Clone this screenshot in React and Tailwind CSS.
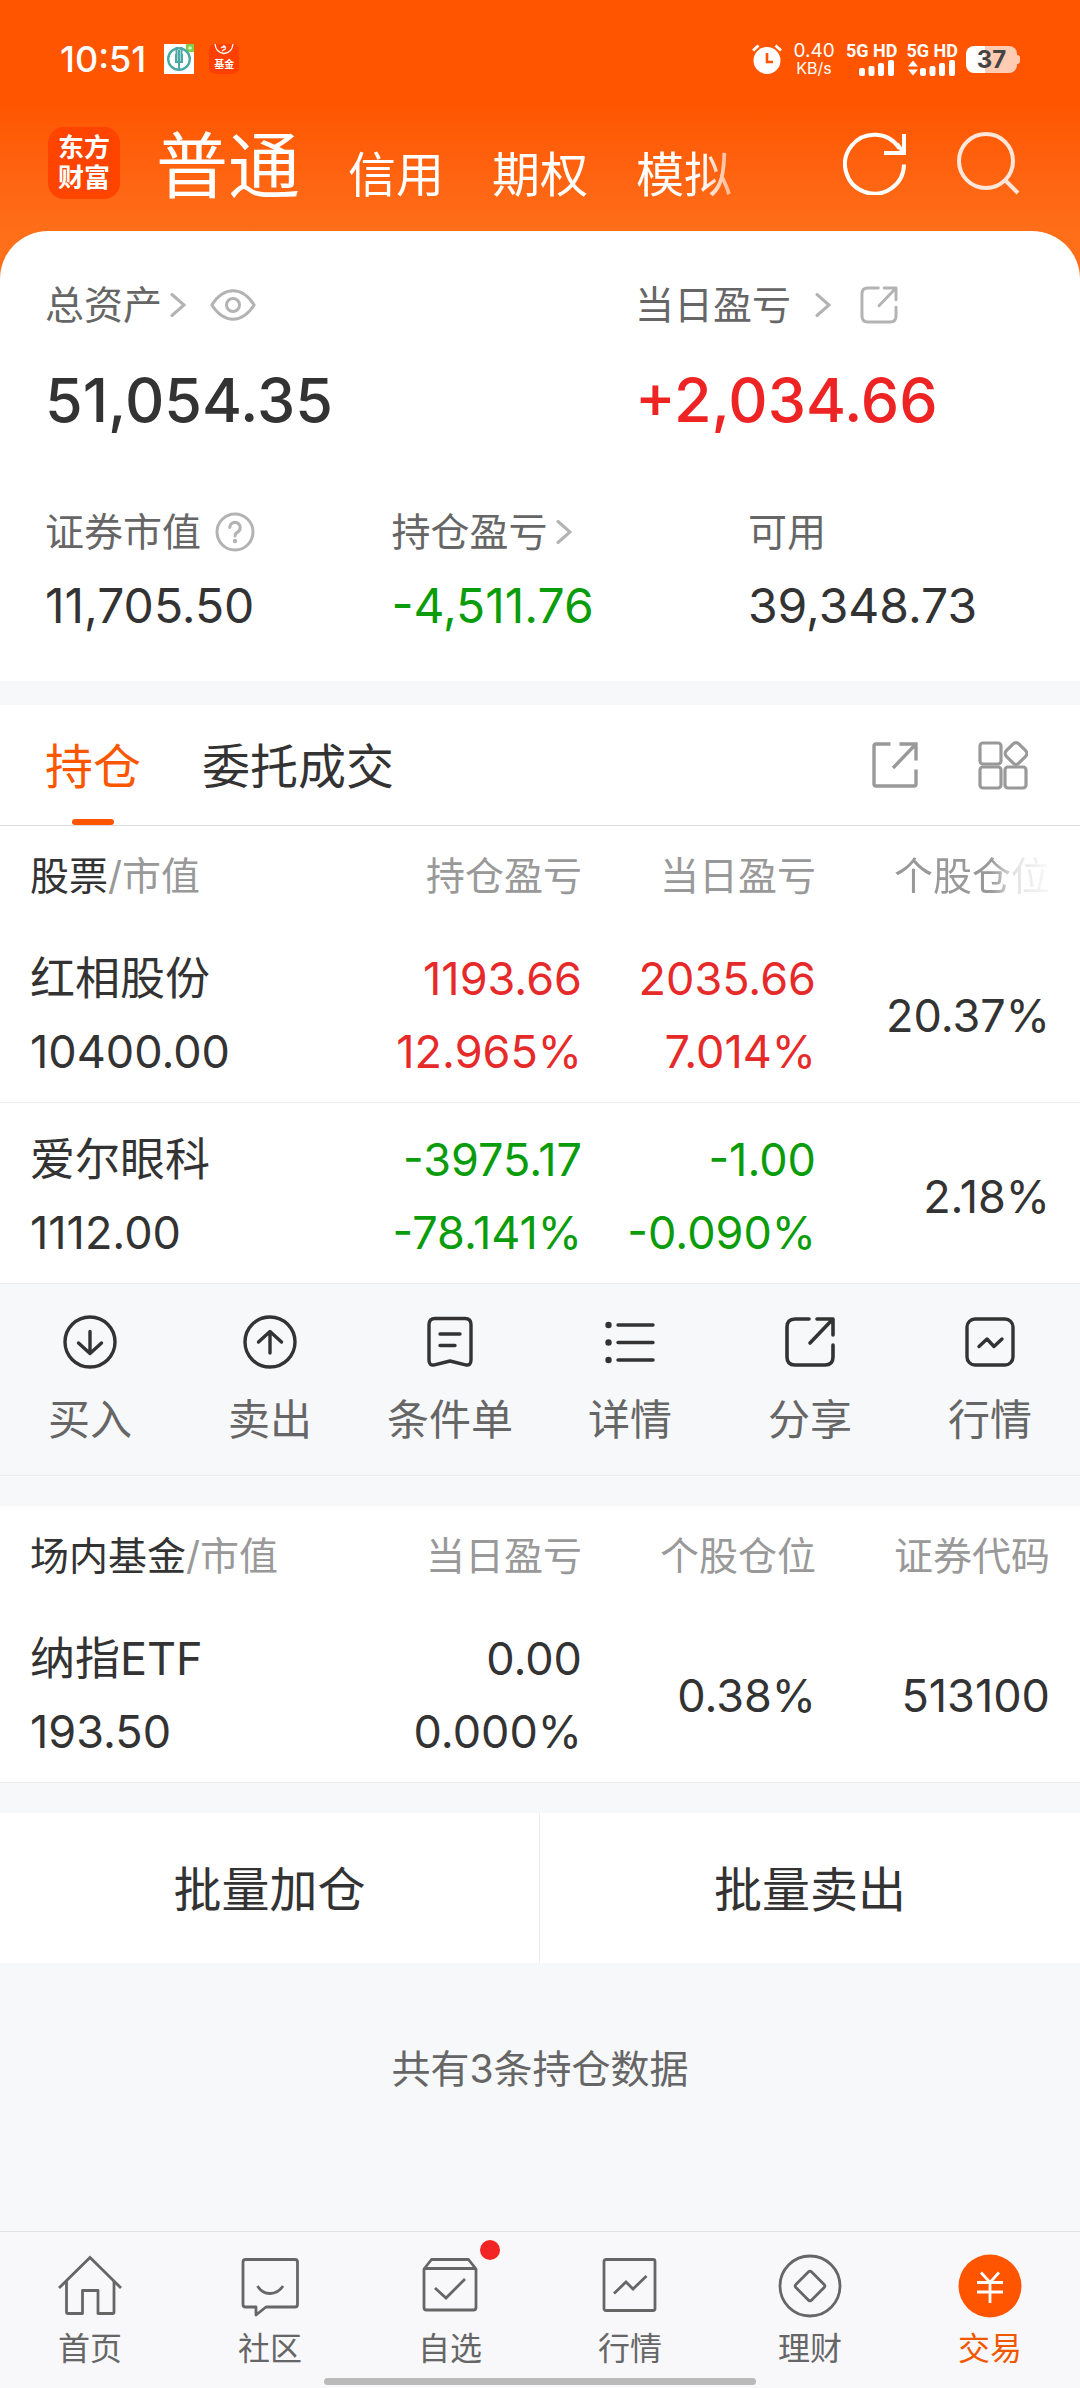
import React, { useState } from 'react';

const summary = [
  { label: '证券市值', value: '11,705.50', color: 'text-[#333]', width: 'w-[35%]', extra: 'help' },
  { label: '持仓盈亏', value: '-4,511.76', color: 'text-[#0a9c0a]', width: 'w-[36%]', extra: 'arrow' },
  { label: '可用', value: '39,348.73', color: 'text-[#333]', width: 'w-[29%]', extra: null },
];

const stocks = {
  title: '股票',
  columns: ['持仓盈亏', '当日盈亏', '个股仓位'],
  fadeLast: true,
  rows: [
    {
      name: '红相股份',
      value: '10400.00',
      color: 'text-[#e62a2a]',
      cells: [['1193.66', '12.965%'], ['2035.66', '7.014%'], ['20.37%']],
    },
    {
      name: '爱尔眼科',
      value: '1112.00',
      color: 'text-[#0a9c0a]',
      cells: [['-3975.17', '-78.141%'], ['-1.00', '-0.090%'], ['2.18%']],
    },
  ],
};

const funds = {
  title: '场内基金',
  columns: ['当日盈亏', '个股仓位', '证券代码'],
  fadeLast: false,
  rows: [
    {
      name: '纳指ETF',
      value: '193.50',
      color: 'text-[#333]',
      cells: [['0.00', '0.000%'], ['0.38%'], ['513100']],
    },
  ],
};

const ChevronRight = () => (
  <svg className="w-4 h-6" viewBox="0 0 16 24" fill="none" stroke="#b3b3b3" strokeWidth="3" strokeLinecap="round">
    <path d="M2 1.5 L14 12 L2 22.5" />
  </svg>
);

const EyeIcon = () => (
  <svg className="w-[46px] h-8" viewBox="0 0 46 32" fill="none" stroke="#b3b3b3" strokeWidth="3">
    <path d="M1.8 16 C8 6.5 15 1.8 23 1.8 S38 6.5 44.2 16 C38 25.500 31 30.200 23 30.200 S8 25.500 1.800 16 Z" strokeLinejoin="round" />
    <circle cx="23" cy="16" r="6.500" />
  </svg>
);

const HelpIcon = () => (
  <svg className="w-10 h-10" viewBox="0 0 40 40" fill="none" stroke="#b3b3b3" strokeWidth="3">
    <circle cx="20" cy="20" r="18" />
    <path d="M14.800 15.500 a5.200 5.200 0 1 1 7.800 4.600 q-2.600 1.500 -2.600 4" strokeLinecap="round" />
    <circle cx="20" cy="29" r="2.200" fill="#b3b3b3" stroke="none" />
  </svg>
);

const ShareRound = ({ className, stroke, strokeWidth }) => (
  <svg className={className} viewBox="0 0 54 54" fill="none" stroke={stroke} strokeWidth={strokeWidth} strokeLinecap="round" strokeLinejoin="round">
    <path d="M26 4 H12 Q4 4 4 12 V42 Q4 50 12 50 H42 Q50 50 50 42 V30" />
    <path d="M34 4 H50 V20 M49 5 L27 28" />
  </svg>
);

const ShareSquare = () => (
  <svg className="w-[46px] h-[46px]" viewBox="0 0 46 46" fill="none" stroke="#999" strokeWidth="3.400">
    <path d="M18.500 2 H4 Q2 2 2 4 V42 Q2 44 4 44 H42 Q44 44 44 42 V27.500" />
    <path d="M27.500 2 H44 V18.500 M43.500 2.500 L21 26" />
  </svg>
);

const GridIcon = () => (
  <svg className="w-[50px] h-[50px]" viewBox="0 0 50 50" fill="none" stroke="#999" strokeWidth="3.200">
    <rect x="2" y="3" width="21" height="21" rx="3" />
    <rect x="2" y="27" width="21" height="21" rx="3" />
    <rect x="27" y="27" width="21" height="21" rx="3" />
    <rect x="29.200" y="4.700" width="17.600" height="17.600" rx="4" transform="rotate(45 38 13.500)" />
  </svg>
);

const actionSvg = {
  className: 'w-[54px] h-[54px]',
  viewBox: '0 0 54 54',
  fill: 'none',
  stroke: '#333',
  strokeWidth: 3.4,
  strokeLinecap: 'round',
  strokeLinejoin: 'round',
};

const actions = [
  {
    label: '买入',
    icon: (
      <svg {...actionSvg}>
        <circle cx="27" cy="27" r="25" />
        <path d="M27 16.500 V38 M15.500 28 L27 38.500 L38.500 28" />
      </svg>
    ),
  },
  {
    label: '卖出',
    icon: (
      <svg {...actionSvg}>
        <circle cx="27" cy="27" r="25" />
        <path d="M27 38 V17 M15.500 27 L27 16.500 L38.500 27" />
      </svg>
    ),
  },
  {
    label: '条件单',
    icon: (
      <svg {...actionSvg}>
        <path d="M12 3.500 H42 Q48 3.500 48 9.500 V45 Q48 51 42.500 49.800 L27 46 L11.500 49.800 Q6 51 6 45 V9.500 Q6 3.500 12 3.500 Z" />
        <path d="M17 19 H37 M17 30.500 H32" />
      </svg>
    ),
  },
  {
    label: '详情',
    icon: (
      <svg {...actionSvg}>
        <path d="M15 10 H50 M15 27.500 H50 M15 45 H50" />
        <g fill="#333" stroke="none">
          <circle cx="5.500" cy="10" r="3.200" />
          <circle cx="5.500" cy="27.500" r="3.200" />
          <circle cx="5.500" cy="45" r="3.200" />
        </g>
      </svg>
    ),
  },
  {
    label: '分享',
    icon: <ShareRound className="w-[54px] h-[54px]" stroke="#333" strokeWidth="3.600" />,
  },
  {
    label: '行情',
    icon: (
      <svg {...actionSvg}>
        <rect x="4" y="4" width="46" height="46" rx="8" />
        <path d="M16 31.500 L24 24 L31 31.500 L39 24" />
      </svg>
    ),
  },
];

const navSvg = {
  className: 'w-16 h-16',
  viewBox: '0 0 64 64',
  fill: 'none',
  stroke: '#666',
  strokeWidth: 2.8,
};

const navItems = [
  {
    label: '首页',
    icon: (
      <svg {...navSvg}>
        <path d="M1 34 L32 3.500 L63 34" />
        <path d="M8.500 27 V58 Q8.500 59.500 10 59.500 H24.500 V36.500 H40 V59.500 H54.500 Q56 59.500 56 58 V27" strokeLinejoin="round" />
      </svg>
    ),
  },
  {
    label: '社区',
    icon: (
      <svg {...navSvg}>
        <path d="M7.500 5.500 H57 Q59.500 5.500 59.500 8 V50.500 Q59.500 53 57 53 H28 L18 61 V53 H7.500 Q5 53 5 50.500 V8 Q5 5.500 7.500 5.500 Z" strokeLinejoin="round" />
        <path d="M19.500 32 Q24 39.500 32 39.500 T45 32" />
      </svg>
    ),
  },
  {
    label: '自选',
    dot: true,
    icon: (
      <svg {...navSvg}>
        <path d="M6 15 L13.500 5.500 H50.500 L58 15 V53.500 Q58 56 55.500 56 H8.500 Q6 56 6 53.500 Z M6 14.500 H58" strokeLinejoin="round" />
        <path d="M17 34 L28 44 L47 25" />
      </svg>
    ),
  },
  {
    label: '行情',
    icon: (
      <svg {...navSvg}>
        <rect x="6" y="5.500" width="51" height="51" rx="2" />
        <path d="M16 39.500 L28 28 L35 35 L48.500 22" />
      </svg>
    ),
  },
  {
    label: '理财',
    icon: (
      <svg {...navSvg}>
        <circle cx="32" cy="32" r="30" />
        <rect x="21" y="21" width="22" height="22" rx="2" transform="rotate(45 32 32)" />
      </svg>
    ),
  },
  {
    label: '交易',
    active: true,
    icon: (
      <svg {...navSvg}>
        <circle cx="32" cy="32" r="31.500" fill="#ff5500" stroke="none" />
        <path d="M23 18.500 L32 28.500 L41 18.500 M32 28 V49 M19 28.500 H45 M19 38 H45" stroke="#fff" />
      </svg>
    ),
  },
];

const SignalBars = ({ arrows }) => (
  <svg className="w-[50px] h-4" viewBox="0 0 50 16" fill="#fff">
    {arrows && <path d="M1 6.500 L6 0.500 L11 6.500 Z M1 9.500 L6 15.500 L11 9.500 Z" />}
    <rect x="13" y="8" width="6" height="8" rx="2" />
    <rect x="22.500" y="6" width="6" height="10" rx="2" />
    <rect x="32" y="3" width="6" height="13" rx="2" />
    <rect x="42" y="0" width="6" height="16" rx="2" />
  </svg>
);

const StatusBar = () => (
  <div className="flex items-center h-[95px] pt-[23px] px-[60px] text-white">
    <span className="text-[36px] leading-[40px] font-medium">10:51</span>
    <svg className="ml-[18px] w-[30px] h-[30px]" viewBox="0 0 30 30">
      <rect width="30" height="30" fill="#fff" />
      <path d="M22 0 H30 V8 H26 Q22 8 22 4 Z" fill="#7ed04a" />
      <circle cx="26" cy="4" r="1.800" fill="#d8f5c4" />
      <circle cx="15" cy="15" r="10.800" fill="none" stroke="#4ba9a5" strokeWidth="2.400" />
      <path d="M12.500 3 V17 M15 6 V25 M17.500 3 V17 M12 10 V18 H18 V10" fill="none" stroke="#4ba9a5" strokeWidth="2" />
    </svg>
    <div className="ml-[15px] w-[30px] h-[30px] rounded-md bg-[#ff4000] flex flex-col items-center overflow-hidden">
      <svg className="w-5 h-[13px] shrink-0" viewBox="0 0 20 13" fill="none" stroke="#fff" strokeWidth="1.300">
        <path d="M1 0 Q2 9 10 9.500 Q18 9 19 0" />
        <path d="M7 4 L10 2 L12 3.500 M8 7 L12 4.500 M10 1 V4" />
      </svg>
      <span className="text-[10px] leading-[14px] font-bold">基金</span>
    </div>

    <svg className="ml-auto w-[30px] h-[30px]" viewBox="0 0 30 30">
      <circle cx="15" cy="16.500" r="13.500" fill="#fff" />
      <path d="M1 6.500 L6.500 1.500 M29 6.500 L23.500 1.500" stroke="#fff" strokeWidth="3" />
      <path d="M15 9 V18 H21" fill="none" stroke="#ff5500" strokeWidth="2.600" />
    </svg>
    <div className="ml-3 w-10 flex flex-col items-center">
      <span className="text-[19px] leading-[18px]">0.40</span>
      <span className="text-[16px] leading-[16px]">KB/s</span>
    </div>
    <div className="ml-3 flex flex-col">
      <span className="text-[18px] leading-[18px] font-bold font-[Roboto]">5G HD</span>
      <SignalBars />
    </div>
    <div className="ml-[9px] flex flex-col">
      <span className="text-[18px] leading-[18px] font-bold font-[Roboto]">5G HD</span>
      <SignalBars arrows />
    </div>
    <div className="ml-2 flex items-center">
      <div className="w-[51px] h-[27px] rounded-lg bg-linear-to-r from-white from-37% to-[#ffccb3] to-37% text-center text-[24px] leading-[27px] font-bold text-[#444]">
        37
      </div>
      <div className="w-[3px] h-[9px] rounded-r-sm bg-[#ffccb3]"></div>
    </div>
  </div>
);

const AccountTabs = () => {
  const [current, setCurrent] = useState('普通');

  return (
    <div className="flex items-center h-[136px] pl-12 pr-[60px]">
      <div className="w-[72px] h-[72px] shrink-0 rounded-2xl bg-[#ff4400] flex flex-col items-center justify-center text-white text-[26px] leading-[30px] font-bold">
        <span>东方</span>
        <span>财富</span>
      </div>
      <nav className="ml-9 pt-1.5 flex-1 min-w-0 flex items-baseline gap-12 overflow-hidden whitespace-nowrap text-white mask-[linear-gradient(to_right,black_calc(100%-64px),transparent)]">
        {['普通', '信用', '期权', '模拟'].map((name) => (
          <button
            key={name}
            onClick={() => setCurrent(name)}
            className={name === current ? 'text-[72px] leading-[88px]' : 'text-[48px] leading-[60px]'}
          >
            {name}
          </button>
        ))}
      </nav>
      <button aria-label="刷新" className="ml-[78px]">
        <svg className="w-16 h-16" viewBox="0 0 64 64" fill="none" stroke="#fff" strokeWidth="4">
          <path d="M61 33.500 A29.500 29.500 0 1 1 56.500 17.500" />
          <path d="M61 3 V22 H41" />
          <path d="M61 22 L54 13" />
        </svg>
      </button>
      <button aria-label="搜索" className="ml-[49px]">
        <svg className="w-16 h-16" viewBox="0 0 64 64" fill="none" stroke="#ffe6da" strokeWidth="4">
          <circle cx="30" cy="30" r="27" />
          <path d="M49 49 L62 62" />
        </svg>
      </button>
    </div>
  );
};

const AssetCard = () => (
  <section className="rounded-t-[48px] bg-white pt-[50px] pb-[47px] px-[45px]">
    <div className="flex">
      <div className="flex-1">
        <div className="flex items-center h-12 text-[39px] text-[#666]">
          总资产
          <span className="ml-2"><ChevronRight /></span>
          <button aria-label="隐藏金额" className="ml-6"><EyeIcon /></button>
        </div>
        <p className="mt-[35px] text-[61px] leading-[72px] font-medium text-[#333]">51,054.35</p>
      </div>
      <div className="w-[400px]">
        <div className="flex items-center h-12 text-[39px] text-[#666]">
          当日盈亏
          <span className="ml-6"><ChevronRight /></span>
          <button aria-label="分享" className="ml-7">
            <ShareRound className="w-10 h-10" stroke="#b3b3b3" strokeWidth="4" />
          </button>
        </div>
        <p className="mt-[35px] text-[61px] leading-[72px] font-medium text-[#ee2424]">+2,034.66</p>
      </div>
    </div>
    <div className="mt-[72px] flex">
      {summary.map((item) => (
        <div key={item.label} className={item.width}>
          <div className="flex items-center h-12 text-[39px] text-[#666]">
            {item.label}
            {item.extra === 'help' && <button aria-label="说明" className="ml-3.5"><HelpIcon /></button>}
            {item.extra === 'arrow' && <span className="ml-2"><ChevronRight /></span>}
          </div>
          <p className={`mt-[22px] text-[48px] leading-[56px] ${item.color}`}>{item.value}</p>
        </div>
      ))}
    </div>
  </section>
);

const HoldingTabs = () => {
  const [tab, setTab] = useState('持仓');

  return (
    <div className="flex items-center h-[121px] pl-[45px] pr-[52px] bg-white border-b border-[#ddd]">
      {['持仓', '委托成交'].map((name) => (
        <button
          key={name}
          onClick={() => setTab(name)}
          className={`relative mr-[61px] h-[120px] pt-1 text-[48px] ${name === tab ? 'text-[#fa5700]' : 'text-[#333]'}`}
        >
          {name}
          {name === tab && (
            <span className="absolute bottom-0 left-1/2 -translate-x-1/2 w-[42px] h-1.5 rounded-full bg-[#ff5500]"></span>
          )}
        </button>
      ))}
      <button aria-label="分享持仓" className="ml-auto"><ShareSquare /></button>
      <button aria-label="更多功能" className="ml-[60px]"><GridIcon /></button>
    </div>
  );
};

const HoldingTable = ({ data }) => (
  <table className="w-full table-fixed bg-white">
    <colgroup>
      <col />
      <col className="w-[234px]" />
      <col className="w-[234px]" />
      <col className="w-[264px]" />
    </colgroup>
    <thead>
      <tr className="text-[39px] leading-[92px] text-[#999] whitespace-nowrap">
        <th className="pt-1 pl-[30px] text-left font-normal">
          <span className="text-[#333]">{data.title}</span>/市值
        </th>
        {data.columns.map((col, i) => (
          <th key={col} className="pt-1 text-right font-normal last:pr-[30px]">
            {data.fadeLast && i === 2 ? (
              <span className="mask-[linear-gradient(to_right,black_62%,#0004_78%,#0001)]">{col}</span>
            ) : (
              col
            )}
          </th>
        ))}
      </tr>
    </thead>
    <tbody>
      {data.rows.map((row) => (
        <tr key={row.name} className="border-b border-[#ebebeb] text-[45px] leading-[73px] text-[#333] whitespace-nowrap">
          <td className="pt-5 pb-3.5 pl-[30px]">
            <div>{row.name}</div>
            <div>{row.value}</div>
          </td>
          {row.cells.map((lines, i) => (
            <td
              key={i}
              className={`pt-5 pb-3.5 text-right last:pr-[30px] ${lines.length > 1 ? row.color : ''}`}
            >
              {lines.map((line) => (
                <div key={line}>{line}</div>
              ))}
            </td>
          ))}
        </tr>
      ))}
    </tbody>
  </table>
);

const ActionBar = () => (
  <div className="grid grid-cols-6 pt-[31px] pb-[31px] border-b border-[#ebebeb]">
    {actions.map((action) => (
      <button key={action.label} className="flex flex-col items-center gap-[27px] text-[42px] leading-[48px] text-[#666]">
        {action.icon}
        {action.label}
      </button>
    ))}
  </div>
);

const BottomNav = () => (
  <footer className="border-t border-[#e2e2e2] bg-[#f8f8fa] pt-[22px]">
    <nav className="grid grid-cols-6">
      {navItems.map((item) => (
        <a
          key={item.label}
          href="#"
          className={`relative flex flex-col items-center gap-[11px] text-[32px] leading-[40px] ${item.active ? 'text-[#f05800]' : 'text-[#666]'}`}
        >
          {item.icon}
          {item.label}
          {item.dot && <span className="absolute -top-3.5 left-1/2 ml-[30px] w-5 h-5 rounded-full bg-[#f22424]"></span>}
        </a>
      ))}
    </nav>
    {/* System gesture bar */}
    <div className="mx-auto mt-[9px] mb-[3px] w-[40%] h-[7px] rounded-full bg-[#bababa]"></div>
  </footer>
);

const App = () => {
  return (
    <div className="min-h-screen flex flex-col bg-[#f7f8fa] font-[Inter,'Noto_Sans_CJK_SC',sans-serif]">
      <header className="bg-linear-to-b from-[#ff5500] from-15% to-[#ff6f1a] to-35%">
        <StatusBar />
        <AccountTabs />
        <AssetCard />
      </header>

      <main className="mt-6 flex-1">
        <HoldingTabs />
        <HoldingTable data={stocks} />
        <ActionBar />

        <div className="mt-[30px]">
          <HoldingTable data={funds} />
        </div>

        {/* Batch operations */}
        <div className="mt-[30px] grid grid-cols-2 bg-white text-[48px] text-[#333]">
          <button className="h-[150px] pt-1 border-r border-[#ebebeb]">批量加仓</button>
          <button className="h-[150px] pt-1">批量卖出</button>
        </div>

        <p className="mt-20 text-center text-[39px] leading-[52px] text-[#666]">共有3条持仓数据</p>
      </main>

      <BottomNav />
    </div>
  );
};

export default App;
